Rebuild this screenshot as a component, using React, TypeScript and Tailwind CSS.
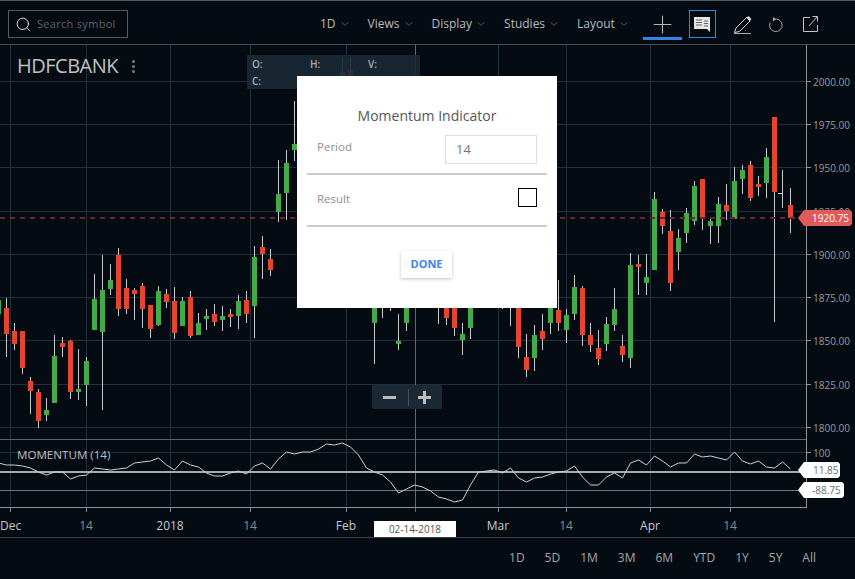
import { ChevronDown, Plus, Search } from 'lucide-react';

const GRID_X = [10, 86, 170, 250, 346, 498, 566, 650, 730];
const GRID_Y = [81, 124, 167, 211, 254, 297, 340, 384, 427];
const PRICES = ['2000.00', '1975.00', '1950.00', '1925.00', '1900.00', '1875.00', '1850.00', '1825.00', '1800.00'];

const GREEN = '#43ab4a';
const RED = '#e5452f';

// index along the time axis, wick top, wick bottom, body top, body bottom, up?
type Candle = [number, number, number, number, number, boolean];
const candles: Candle[] = [
  [-1, 295, 320, 300, 314, true],
  [0, 298, 357, 308, 334, false],
  [1, 323, 350, 331, 344, false],
  [2, 331, 374, 331, 368, false],
  [3, 377, 414, 381, 391, false],
  [4, 389, 428, 392, 421, false],
  [5, 398, 421, 410, 415, true],
  [6, 335, 403, 356, 403, true],
  [7, 337, 357, 343, 347, false],
  [8, 340, 399, 341, 392, false],
  [9, 349, 400, 389, 392, true],
  [10, 357, 406, 361, 385, true],
  [11, 274, 330, 299, 330, true],
  [12, 255, 410, 290, 332, true],
  [13, 264, 295, 280, 289, true],
  [14, 248, 316, 255, 309, false],
  [15, 279, 314, 288, 309, false],
  [16, 288, 320, 290, 294, false],
  [17, 283, 328, 286, 309, false],
  [18, 305, 338, 305, 329, false],
  [19, 286, 326, 291, 325, true],
  [20, 289, 308, 294, 302, false],
  [21, 287, 339, 301, 333, false],
  [22, 297, 326, 301, 326, true],
  [23, 291, 338, 297, 336, false],
  [24, 313, 335, 323, 335, true],
  [25, 309, 330, 316, 319, true],
  [26, 304, 326, 314, 322, false],
  [27, 306, 331, 316, 320, true],
  [28, 309, 327, 314, 317, false],
  [29, 295, 329, 301, 316, true],
  [30, 291, 323, 300, 314, false],
  [31, 246, 338, 257, 306, true],
  [32, 236, 279, 247, 254, false],
  [33, 249, 276, 259, 270, false],
  [34, 160, 222, 194, 212, true],
  [35, 150, 220, 163, 193, true],
  [36, 101, 161, 144, 150, true],
  [42, 57, 90, 72, 90, true],
  [43, 57, 90, 70, 90, false],
  [46, 300, 364, 300, 323, true],
  [47, 300, 318, 300, 300, false],
  [48, 300, 311, 300, 300, false],
  [49, 314, 350, 341, 344, true],
  [50, 300, 331, 300, 323, true],
  [54, 300, 324, 300, 300, false],
  [55, 300, 325, 300, 318, false],
  [56, 300, 336, 300, 328, false],
  [57, 323, 355, 334, 340, true],
  [58, 300, 339, 300, 328, true],
  [62, 300, 309, 300, 300, false],
  [63, 300, 326, 300, 300, false],
  [64, 300, 358, 300, 347, false],
  [65, 334, 377, 357, 370, false],
  [66, 325, 371, 335, 358, true],
  [67, 314, 350, 331, 339, false],
  [68, 300, 334, 300, 323, true],
  [69, 280, 331, 310, 323, false],
  [70, 309, 343, 315, 330, true],
  [71, 275, 320, 287, 314, true],
  [72, 286, 346, 288, 335, false],
  [73, 323, 352, 335, 345, false],
  [74, 330, 365, 348, 359, false],
  [75, 317, 351, 324, 344, true],
  [76, 288, 331, 309, 325, true],
  [77, 335, 362, 346, 355, false],
  [78, 253, 368, 265, 358, true],
  [79, 255, 295, 264, 267, false],
  [80, 254, 295, 277, 283, true],
  [81, 192, 270, 199, 270, true],
  [82, 209, 234, 212, 226, false],
  [83, 210, 291, 231, 283, false],
  [84, 229, 270, 238, 252, true],
  [85, 208, 243, 213, 233, true],
  [86, 181, 225, 186, 221, true],
  [87, 179, 230, 179, 218, false],
  [88, 219, 244, 221, 226, true],
  [89, 197, 243, 204, 226, true],
  [90, 184, 220, 205, 211, false],
  [91, 167, 219, 181, 219, true],
  [92, 165, 194, 170, 179, true],
  [93, 161, 201, 165, 198, false],
  [94, 176, 196, 184, 187, false],
  [95, 148, 198, 157, 183, true],
  [96, 117, 322, 117, 192, false],
  [97, 170, 208, 170, 170, true],
  [98, 188, 233, 205, 218, false],
];

const momentum = [
  463, 465, 465, 466, 468, 472, 475, 472, 472, 479, 476, 475, 468, 469, 470, 469, 468, 463, 462, 461,
  458, 465, 470, 461, 465, 467, 473, 476, 476, 473, 471, 474, 466, 463, 469, 459, 452, 454, 452, 452,
  449, 444, 445, 443, 447, 455, 468, 472, 475, 482, 493, 489, 485, 487, 491, 497, 499, 502, 500, 485,
  472, 471, 470, 473, 468, 478, 482, 478, 477, 474, 472, 471, 466, 477, 485, 485, 477, 473, 478, 463,
  460, 465, 456, 461, 467, 463, 463, 454, 457, 456, 458, 460, 452, 461, 464, 461, 467, 468, 462, 469,
];
const momentumPoints = momentum.map((y, i) => `${6.5 + 8 * (i - 1)},${y}`).join(' ');

const dateTicks = [
  { x: 10, label: 'Dec', strong: true },
  { x: 86, label: '14' },
  { x: 170, label: '2018', strong: true },
  { x: 250, label: '14' },
  { x: 346, label: 'Feb', strong: true },
  { x: 415, label: '14' },
  { x: 498, label: 'Mar', strong: true },
  { x: 566, label: '14' },
  { x: 650, label: 'Apr', strong: true },
  { x: 730, label: '14' },
];

const menus = [
  { label: '1D', margin: 'ml-[192px]' },
  { label: 'Views', margin: 'ml-[17px]' },
  { label: 'Display', margin: 'ml-[17px]' },
  { label: 'Studies', margin: 'ml-[17px]' },
  { label: 'Layout', margin: 'ml-[17px]' },
];

const ranges = ['1D', '5D', '1M', '3M', '6M', 'YTD', '1Y', '5Y', 'All'];

function Chart() {
  return (
    <svg viewBox="0 45 855 492" className="block h-[492px] w-[855px]">
      {GRID_Y.map((y) => (
        <rect key={y} x={0} y={y} width={806} height={1} fill="#22303b" />
      ))}
      <rect x={0} y={452} width={806} height={1} fill="#22303b" />
      {GRID_X.map((x) => (
        <g key={x}>
          <rect x={x} y={45} width={1} height={462} fill="#22303b" />
          <rect x={x} y={507} width={1} height={5} fill="#808586" />
        </g>
      ))}
      <rect x={415} y={45} width={1} height={467} fill="#5f6a70" />

      {/* price candles */}
      {candles.map(([k, wt, wb, bt, bb, up]) => (
        <g key={k}>
          <rect x={6 + 8 * k} y={wt} width={1} height={wb - wt} fill="#c8cacb" />
          {bb > bt && <rect x={4 + 8 * k} y={bt} width={5} height={bb - bt} fill={up ? GREEN : RED} />}
        </g>
      ))}
      <rect x={778} y={193} width={5} height={1} fill="#d5d5d5" />
      <line x1={0} x2={798} y1={218} y2={218} stroke="#642a2e" strokeWidth={2} strokeDasharray="5 5" />

      {/* study panel */}
      <rect x={0} y={439} width={806} height={1} fill="#59666c" />
      <rect x={0} y={471} width={806} height={2} fill="#a9abab" />
      <rect x={0} y={490} width={806} height={1} fill="#6d787c" />
      <rect x={0} y={507} width={807} height={1} fill="#8a8e8f" />
      <polyline points={momentumPoints} fill="none" stroke="#cfd1d1" strokeWidth={1} />
      <text x={17} y={459} className="fill-[#bdbfbf] text-[11.6px]">MOMENTUM (14)</text>

      {/* axes */}
      <rect x={806} y={45} width={1} height={463} fill="#8f9394" />
      {PRICES.map((p, i) => (
        <g key={p}>
          <rect x={807} y={GRID_Y[i]} width={4} height={1} fill="#8f9394" />
          <text x={813} y={GRID_Y[i] + 5} className="fill-[#9a9c9c] text-[10px]">{p}</text>
        </g>
      ))}
      <rect x={807} y={452} width={4} height={1} fill="#8f9394" />
      <text x={813} y={457} className="fill-[#9a9c9c] text-[10px]">100</text>
      {dateTicks.map((t) => (
        <text
          key={t.x}
          x={t.x === 10 ? 0 : t.x}
          y={530}
          textAnchor={t.x === 10 ? 'start' : 'middle'}
          className={`text-[12px] ${t.strong ? 'fill-[#c8caca]' : 'fill-[#8a8c8c]'}`}
        >
          {t.label}
        </text>
      ))}

      {/* last price tags */}
      <polygon points="798,218 804,210 850,210 852,212 852,224 850,226 804,226" fill="#e05a5a" />
      <text x={812} y={222} className="fill-white text-[10px]">1920.75</text>
      <polygon points="798,470 804,462 838,462 840,464 840,476 838,478 804,478" fill="#ffffff" />
      <text x={813} y={474} className="fill-[#6b6b6b] text-[10px]">11.85</text>
      <polygon points="798,490 804,482 842,482 844,484 844,496 842,498 804,498" fill="#ffffff" />
      <text x={812} y={494} className="fill-[#6b6b6b] text-[10px]">-88.75</text>
    </svg>
  );
}

function MomentumDialog() {
  return (
    <div className="absolute left-[297px] top-[31px] w-[260px] bg-white px-[10px] pb-[30px] pt-[30px]">
      <h2 className="h-[20px] text-center text-[14px] leading-[20px] text-[#555]">Momentum Indicator</h2>
      <div className="mt-[9px] flex items-start justify-between border-b-2 border-[#ccc] pb-[9px] pl-[10px] pr-[10px]">
        <span className="mt-[4px] text-[11.5px] leading-[16px] text-[#8f8f8f]">Period</span>
        <div className="flex h-[29px] w-[92px] items-center border border-[#ddd] pl-[10px] text-[13px] text-[#777]">14</div>
      </div>
      <div className="flex items-start justify-between border-b-2 border-[#ccc] pb-[18px] pl-[10px] pr-[10px] pt-[13px]">
        <span className="mt-[3px] text-[11.5px] leading-[16px] text-[#8f8f8f]">Result</span>
        <div className="h-[19px] w-[19px] border border-black" />
      </div>
      <div className="mt-[24px] flex justify-center pr-[1px]">
        <button className="h-[27px] w-[51px] bg-white text-[11px] font-bold text-[#3b82f6] shadow-[0_1px_3px_rgba(0,0,0,0.25)]">
          DONE
        </button>
      </div>
    </div>
  );
}

export default function App() {
  return (
    <div className="h-[579px] w-[855px] overflow-hidden border-t border-[#55585a] bg-[#040b13] font-['Open_Sans',sans-serif]">
      <header className="flex h-[44px] items-start border-b border-[#4b4f50]">
        <div className="ml-[8px] mt-[9px] flex h-[28px] w-[120px] items-center gap-[5px] border border-[#555a5c] pl-[6px]">
          <Search size={17} strokeWidth={1.2} className="text-white" />
          <span className="text-[11px] tracking-[0.3px] text-[#5f6364]">Search symbol</span>
        </div>
        {menus.map((m) => (
          <div key={m.label} className={`${m.margin} mt-[14px] flex h-[18px] items-center gap-[3px] text-[12px] text-[#b9bbbb]`}>
            {m.label}
            <ChevronDown size={12} strokeWidth={1} className="text-[#a0a2a2]" />
          </div>
        ))}
        <div className="ml-[13px] flex h-[39px] w-[39px] items-center justify-center border-b-[3px] border-[#3584e4] pt-[10px]">
          <Plus size={29} strokeWidth={0.9} className="shrink-0 text-[#b5b7b7]" />
        </div>
        <div className="ml-[7px] mt-[9px] flex h-[28px] w-[27px] items-center justify-center border border-[#3584e4]">
          <svg width="18" height="17" viewBox="0 0 18 17">
            <path d="M1 1h16v15l-3-3H1z" fill="#e4e6e6" />
            <path d="M3 4h6M3 6.5h6M3 9h6M11 5h4M11 7.5h4M11 10h4" stroke="#555" strokeWidth="0.9" />
          </svg>
        </div>
        <svg width="20" height="20" viewBox="0 0 20 20" fill="none" stroke="#d5d7d7" className="ml-[17px] mt-[14px]">
          <path d="M1.5 17.5 3 13 13.5 2.5l3.5 3.5L6.5 16.5z" strokeWidth="1" />
          <path d="M13.5 2.5 17 6l1-2-2-2.5z" fill="#d5d7d7" strokeWidth="0.5" />
          <path d="M1 18.5h17" strokeWidth="0.8" />
        </svg>
        <svg width="16" height="18" viewBox="0 0 16 18" fill="none" stroke="#a5a7a7" className="ml-[15px] mt-[14px]">
          <path d="M5.5 4.4a6.3 6.3 0 1 1-3.4 3.2" strokeWidth="1" />
          <path d="M5 1.8 8 4.4 4.8 6.6z" fill="#a5a7a7" stroke="none" />
        </svg>
        <svg width="17" height="18" viewBox="0 0 17 18" fill="none" stroke="#c5c7c7" className="ml-[18px] mt-[14px]">
          <path d="M8 2.5H1.5v14h14V10" strokeWidth="1" />
          <path d="M7 11l8-9M10.5 1.5h5v5" strokeWidth="1" />
        </svg>
      </header>

      <div className="relative h-[493px] border-b border-[#3b3f40]">
        <Chart />
        <div className="absolute left-[17px] top-[9px] flex items-center gap-[14px]">
          <span className="text-[20px] leading-[24px] tracking-[-0.5px] text-[#c0c2c2]">HDFCBANK</span>
          <div className="flex flex-col gap-[2px]">
            <span className="h-[3px] w-[3px] rounded-full bg-[#7a7c7c]" />
            <span className="h-[3px] w-[3px] rounded-full bg-[#7a7c7c]" />
            <span className="h-[3px] w-[3px] rounded-full bg-[#7a7c7c]" />
          </div>
        </div>
        <div className="absolute left-[247px] top-[10px] grid h-[34px] w-[173px] grid-cols-[58px_58px_1fr] grid-rows-2 bg-[#1b2935]/90 pl-[5px] pt-[1px] text-[10px] font-semibold leading-[17px] text-[#a9abab]">
          <span>O:</span>
          <span>H:</span>
          <span>V:</span>
          <span>C:</span>
        </div>
        <MomentumDialog />
        <div className="absolute left-[372px] top-[340px] flex h-[24px] w-[70px] items-center rounded-[2px] bg-[#1b2935]">
          <div className="flex w-[36px] justify-start pl-[11px]">
            <span className="h-[3px] w-[13px] bg-[#bcbcbc]" />
          </div>
          <span className="h-[17px] w-px bg-[#45525b]" />
          <div className="relative flex flex-1 justify-center pr-[2px]">
            <span className="h-[3px] w-[13px] bg-[#bcbcbc]" />
            <span className="absolute top-[-5px] h-[13px] w-[3px] bg-[#bcbcbc]" />
          </div>
        </div>
        <div className="absolute left-[374px] top-[476px] flex h-[16px] w-[82px] items-center justify-center bg-white text-[10px] text-[#555]">
          02-14-2018
        </div>
      </div>

      <footer className="flex h-[40px] items-center justify-end gap-[20px] pb-[1px] pr-[39px] text-[12px] text-[#a5a7a7]">
        {ranges.map((r) => (
          <span key={r}>{r}</span>
        ))}
      </footer>
    </div>
  );
}
